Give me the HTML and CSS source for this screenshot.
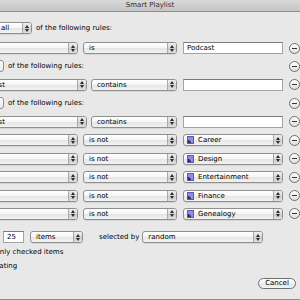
FILE: index.html
```html
<!DOCTYPE html>
<html>
  <head>
    <title>Smart Playlist</title>
    <link rel="stylesheet" href="styles.css">
  </head>
  <body>
    <div class="window">
      <div class="titlebar">Smart Playlist</div>

      <div class="rules">
        <div class="row">
          <div class="popup match-popup">all<span class="arrows"></span></div>
          <span class="label">of the following rules:</span>
        </div>

        <div class="row">
          <div class="popup field">Genre<span class="arrows"></span></div>
          <div class="popup op">is<span class="arrows"></span></div>
          <div class="textbox">Podcast</div>
          <div class="minus"></div>
        </div>

        <div class="row">
          <div class="stub"></div>
          <span class="label">of the following rules:</span>
          <div class="minus"></div>
        </div>

        <div class="row nested">
          <div class="popup field">Playlist<span class="arrows"></span></div>
          <div class="popup op">contains<span class="arrows"></span></div>
          <div class="textbox"></div>
          <div class="minus"></div>
        </div>

        <div class="row">
          <div class="stub"></div>
          <span class="label">of the following rules:</span>
          <div class="minus"></div>
        </div>

        <div class="row nested">
          <div class="popup field">Playlist<span class="arrows"></span></div>
          <div class="popup op">contains<span class="arrows"></span></div>
          <div class="textbox"></div>
          <div class="minus"></div>
        </div>

        <div class="row">
          <div class="popup field">Playlist<span class="arrows"></span></div>
          <div class="popup op">is not<span class="arrows"></span></div>
          <div class="popup value">
            <svg class="pl-icon" width="7" height="8" viewBox="0 0 7 8"><rect x="0.5" y="0.5" width="6" height="7" fill="#8d8de8" stroke="#5a5ab4"/><path d="M1 7V4h1.5v1.5H4V7z" fill="#2a2a5a"/></svg>
            Career<span class="arrows"></span>
          </div>
          <div class="minus"></div>
        </div>

        <div class="row">
          <div class="popup field">Playlist<span class="arrows"></span></div>
          <div class="popup op">is not<span class="arrows"></span></div>
          <div class="popup value">
            <svg class="pl-icon" width="7" height="8" viewBox="0 0 7 8"><rect x="0.5" y="0.5" width="6" height="7" fill="#8d8de8" stroke="#5a5ab4"/><path d="M1 7V4h1.5v1.5H4V7z" fill="#2a2a5a"/></svg>
            Design<span class="arrows"></span>
          </div>
          <div class="minus"></div>
        </div>

        <div class="row">
          <div class="popup field">Playlist<span class="arrows"></span></div>
          <div class="popup op">is not<span class="arrows"></span></div>
          <div class="popup value">
            <svg class="pl-icon" width="7" height="8" viewBox="0 0 7 8"><rect x="0.5" y="0.5" width="6" height="7" fill="#8d8de8" stroke="#5a5ab4"/><path d="M1 7V4h1.5v1.5H4V7z" fill="#2a2a5a"/></svg>
            Entertainment<span class="arrows"></span>
          </div>
          <div class="minus"></div>
        </div>

        <div class="row">
          <div class="popup field">Playlist<span class="arrows"></span></div>
          <div class="popup op">is not<span class="arrows"></span></div>
          <div class="popup value">
            <svg class="pl-icon" width="7" height="8" viewBox="0 0 7 8"><rect x="0.5" y="0.5" width="6" height="7" fill="#8d8de8" stroke="#5a5ab4"/><path d="M1 7V4h1.5v1.5H4V7z" fill="#2a2a5a"/></svg>
            Finance<span class="arrows"></span>
          </div>
          <div class="minus"></div>
        </div>

        <div class="row">
          <div class="popup field">Playlist<span class="arrows"></span></div>
          <div class="popup op">is not<span class="arrows"></span></div>
          <div class="popup value">
            <svg class="pl-icon" width="7" height="8" viewBox="0 0 7 8"><rect x="0.5" y="0.5" width="6" height="7" fill="#8d8de8" stroke="#5a5ab4"/><path d="M1 7V4h1.5v1.5H4V7z" fill="#2a2a5a"/></svg>
            Genealogy<span class="arrows"></span>
          </div>
          <div class="minus"></div>
        </div>
      </div>

      <div class="limit-row">
        <div class="textbox count">25</div>
        <div class="popup unit">items<span class="arrows"></span></div>
        <span class="label selected">selected by</span>
        <div class="popup order">random<span class="arrows"></span></div>
      </div>

      <div class="option checked-only">Match only checked items</div>
      <div class="option live">Live updating</div>

      <div class="buttons">
        <div class="button">Cancel</div>
      </div>
    </div>
  </body>
</html>
```

FILE: styles.css
```css
body {
  margin: 0;
  overflow: hidden;
  font-family: "DejaVu Sans", sans-serif;
  font-size: 7px;
  color: #000;
}

.window {
  width: 300px;
  height: 300px;
  box-sizing: border-box;
  background: #e8e8e8;
  border-bottom: 1px solid #8c8c8c;
  overflow: hidden;
}

.titlebar {
  height: 11px;
  line-height: 11px;
  text-align: center;
  color: #2e2e2e;
  background: linear-gradient(#d9d9d9, #c4c4c4);
  border-bottom: 1px solid #8e8e8e;
}

.rules {
  padding-top: 6.8px;
}

.row {
  display: flex;
  align-items: center;
  height: 18.44px;
  white-space: nowrap;
}

.row:first-child {
  margin-bottom: 1.6px;
}

.row > * {
  flex-shrink: 0;
}

.popup {
  display: flex;
  align-items: center;
  box-sizing: border-box;
  height: 12px;
  padding-left: 5px;
  border: 1px solid #8f8f8f;
  border-radius: 3px;
  background: linear-gradient(#ffffff, #f6f6f6 45%, #e6e6e6 55%, #f2f2f2);
  box-shadow: 0 1px 0 rgba(0, 0, 0, 0.08);
  white-space: nowrap;
  overflow: hidden;
}

.popup .arrows {
  margin-left: auto;
  flex-shrink: 0;
  width: 9px;
  height: 100%;
  box-sizing: border-box;
  border-left: 1px solid #a9a9a9;
  background: linear-gradient(#eef0f3, #d6d9de 50%, #c7cad0 51%, #dfe1e5);
  display: flex;
  flex-direction: column;
  align-items: center;
  justify-content: center;
  gap: 1px;
}

.popup .arrows::before,
.popup .arrows::after {
  content: "";
  border-left: 2px solid transparent;
  border-right: 2px solid transparent;
}

.popup .arrows::before {
  border-bottom: 3px solid #2b2b2b;
}

.popup .arrows::after {
  border-top: 3px solid #2b2b2b;
}

.match-popup {
  margin-left: -8px;
  width: 40px;
  padding-left: 8px;
}

.label {
  margin-left: 4px;
}

.field {
  margin-left: -37px;
  width: 115px;
  padding-left: 7px;
}

.op {
  margin-left: 5px;
  width: 94px;
}

.nested .field {
  margin-left: -28px;
  width: 115px;
}

.nested .op {
  margin-left: 4px;
  width: 86px;
}

.textbox {
  box-sizing: border-box;
  height: 12px;
  line-height: 10px;
  padding-left: 3px;
  background: #fff;
  border: 1px solid #a4a4a4;
  border-top-color: #7c7c7c;
}

.row .textbox,
.value {
  margin-left: 6px;
  width: 100px;
}

.value {
  padding-left: 3px;
}

.pl-icon {
  flex-shrink: 0;
  margin-right: 4px;
}

.stub {
  margin-left: -30px;
  width: 34px;
  height: 12px;
  box-sizing: border-box;
  border: 1px solid #8f8f8f;
  border-radius: 3px;
  background: linear-gradient(#ffffff, #e8e8e8);
}

.minus {
  margin-left: auto;
  width: 11px;
  height: 11px;
  box-sizing: border-box;
  border: 1px solid #6f6f6f;
  border-radius: 50%;
  background: linear-gradient(#ffffff, #e0e0e0);
  display: flex;
  align-items: center;
  justify-content: center;
}

.minus::before {
  content: "";
  width: 5px;
  height: 1px;
  background: #333;
}

.limit-row {
  display: flex;
  align-items: center;
  height: 14px;
  margin-top: 7px;
  white-space: nowrap;
}

.limit-row > * {
  flex-shrink: 0;
}

.count {
  margin-left: 3px;
  width: 21px;
}

.unit {
  margin-left: 6px;
  width: 53px;
}

.selected {
  margin-left: 16px;
}

.order {
  margin-left: 3px;
  width: 121px;
}

.option {
  height: 14px;
  line-height: 14px;
  white-space: nowrap;
}

.checked-only {
  margin-top: 1px;
  margin-left: -28px;
}

.live {
  margin-left: -30.5px;
}

.buttons {
  display: flex;
  justify-content: flex-end;
  padding-right: 4px;
  margin-top: 5px;
}

.button {
  width: 38px;
  height: 11px;
  box-sizing: border-box;
  line-height: 9px;
  text-align: center;
  border: 1px solid #6f6f6f;
  border-radius: 6px;
  background: linear-gradient(#ffffff, #f1f1f1 50%, #e2e2e2 51%, #f5f5f5);
}
```
